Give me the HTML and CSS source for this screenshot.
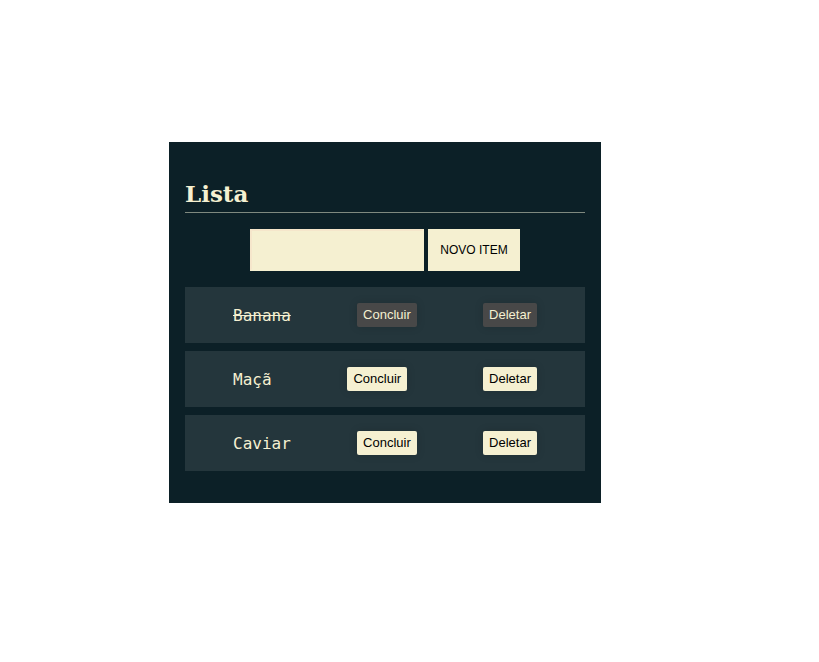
FILE: index.html
```html
<!DOCTYPE html>
<html lang="pt-BR">
<head>
<meta charset="utf-8">
<meta name="viewport" content="width=device-width, initial-scale=1">
<title>Lista</title>
<link rel="stylesheet" href="styles.css">
</head>
<body>
<main class="card">
  <h1 class="title">Lista</h1>
  <form class="new-item">
    <input class="field" type="text" aria-label="Novo item">
    <button class="add" type="button">NOVO ITEM</button>
  </form>
  <ul class="list">
    <li class="item done"><span class="name">Banana</span><button class="action" type="button">Concluir</button><button class="action" type="button">Deletar</button></li>
    <li class="item"><span class="name">Maçã</span><button class="action" type="button">Concluir</button><button class="action" type="button">Deletar</button></li>
    <li class="item"><span class="name">Caviar</span><button class="action" type="button">Concluir</button><button class="action" type="button">Deletar</button></li>
  </ul>
</main>
</body>
</html>
```
FILE: styles.css
```css
* { box-sizing: border-box; }

body {
  margin: 0;
  min-height: 100vh;
  padding: 0 49px 17px 0;
  display: flex;
  align-items: center;
  justify-content: center;
  background: #fff;
}

.card {
  width: 100%;
  max-width: 432px;
  padding: 32px 16px;
  background: #0c2027;
  color: #f5f0d1;
}

.title {
  margin: 0 0 16px;
  padding: 4px 0 2px;
  border-bottom: 1px solid #7f897f;
  font: bold 23px/32px "DejaVu Serif", serif;
}

.new-item {
  display: flex;
  justify-content: center;
  gap: 4px;
  margin-bottom: 16px;
}

.field {
  width: 174px;
  height: 42px;
  padding: 8px;
  border: 2px solid #f5f0d1;
  border-top-color: #f5e6cb;
  border-left-color: #f5e6cb;
  border-radius: 0;
  background: #f5f0d1;
}

.add {
  height: 42px;
  padding: 0 12px;
  border: 0;
  background: #f5f0d1;
  color: #000;
  font: 12px "Liberation Sans", sans-serif;
}

.list {
  margin: 0;
  padding: 0;
  list-style: none;
  display: grid;
  gap: 8px;
}

.item {
  display: flex;
  align-items: center;
  justify-content: space-between;
  padding: 16px 48px;
  background: #24363c;
}

.name {
  padding-top: 2px;
  font: 16px/22px "DejaVu Sans Mono", monospace;
}

.action {
  height: 24px;
  padding: 0 6px 2px;
  border: 0;
  border-radius: 2px;
  background: #f5f0d1;
  color: #000;
  font: 13px "Liberation Sans", sans-serif;
  box-shadow: 0 0 8px rgba(0, 0, 0, 0.15);
}

.done .name { text-decoration: line-through; }
.done .action { background: #484848; color: #f5f0d1; }
```
